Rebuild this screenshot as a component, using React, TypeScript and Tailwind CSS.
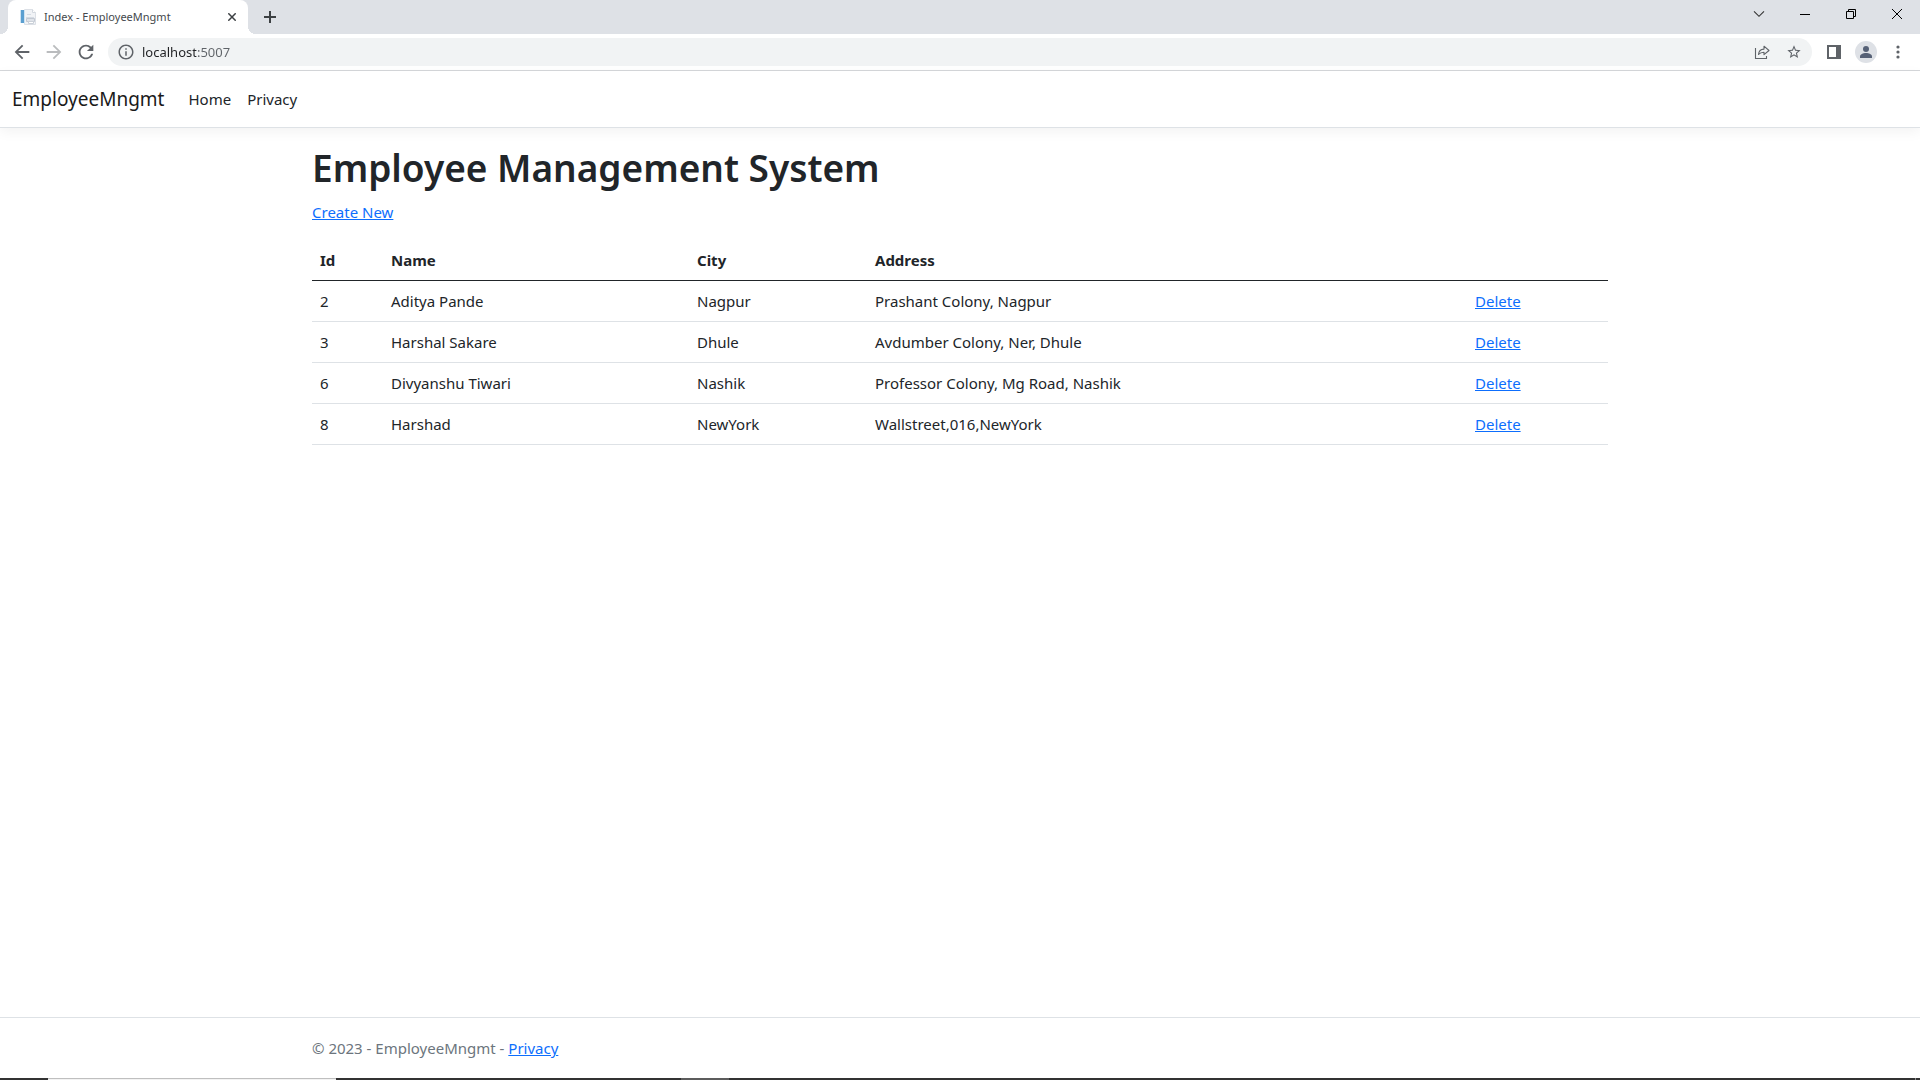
import type { ReactNode } from "react";

type Employee = { id: number; name: string; city: string; address: string };

const employees: Employee[] = [
  { id: 2, name: "Aditya Pande", city: "Nagpur", address: "Prashant Colony, Nagpur" },
  { id: 3, name: "Harshal Sakare", city: "Dhule", address: "Avdumber Colony, Ner, Dhule" },
  { id: 6, name: "Divyanshu Tiwari", city: "Nashik", address: "Professor Colony, Mg Road, Nashik" },
  { id: 8, name: "Harshad", city: "NewYork", address: "Wallstreet,016,NewYork" },
];

function WindowButton({ label, children }: { label: string; children: ReactNode }) {
  return (
    <button type="button" aria-label={label} className="flex h-7 w-[46px] items-center justify-center text-black">
      {children}
    </button>
  );
}

function ToolButton({ label, children }: { label: string; children: ReactNode }) {
  return (
    <button type="button" aria-label={label} className="flex h-7 w-8 shrink-0 items-center justify-center text-[#5f6368]">
      {children}
    </button>
  );
}

function PageIcon() {
  return (
    <svg width="16" height="16" viewBox="0 0 16 16" className="shrink-0" aria-hidden="true">
      <path d="M4.5.5h8l3 3v12h-11z" fill="#f1f3f6" stroke="#dce0e6" />
      <path d="M12.5.5v3h3" fill="#fff" stroke="#d3d8df" />
      <path d="M1 1h3v13H1z" fill="#5b9fd0" />
      <path d="M0 1h1v13H0zM4 1h1v14H4z" fill="#cfe3f2" />
      <path d="M7 5h4v1H7zM6 8h8v1H6z" fill="#d5dbe3" />
      <path d="M6.5 9.500h8v3h-8z" fill="#dfe3e9" stroke="#c3c9d2" />
      <path d="M8.500 12.500h5v2h-5z" fill="#fff" stroke="#cbd1d9" />
    </svg>
  );
}

function TabStrip() {
  return (
    <div className="flex h-[34px] items-start justify-between bg-[#dee1e6]">
      <div className="flex h-full items-end">
        <span className="size-2 bg-[radial-gradient(circle_at_top_left,transparent_8px,#fff_8px)]" />
        <div className="flex h-full w-60 items-center rounded-t-lg bg-white pl-3 pr-2">
          <PageIcon />
          <span className="ml-2 flex-1 whitespace-nowrap text-[11px] leading-4 text-[#45494d]">Index - EmployeeMngmt</span>
          <button type="button" aria-label="Close tab" className="flex size-4 items-center justify-center text-[#3c4043]">
            <svg width="8" height="8" viewBox="0 0 8 8" stroke="currentColor" strokeWidth="1.500">
              <path d="M.3.3l7.400 7.400M7.700.3L.3 7.700" />
            </svg>
          </button>
        </div>
        <span className="size-2 bg-[radial-gradient(circle_at_top_right,transparent_8px,#fff_8px)]" />
        <button type="button" aria-label="New tab" className="flex h-full w-7 items-center justify-center text-[#3c4043]">
          <svg width="12" height="12" viewBox="0 0 12 12" fill="currentColor">
            <path d="M5 0h2v5h5v2H7v5H5V7H0V5h5z" />
          </svg>
        </button>
      </div>
      <div className="flex">
        <WindowButton label="Search tabs">
          <svg width="12" height="8" viewBox="0 0 12 8" fill="none" stroke="#333" strokeWidth="1.100">
            <path d="M1 1.300l5 5 5-5" />
          </svg>
        </WindowButton>
        <WindowButton label="Minimize">
          <svg width="10" height="10" viewBox="0 0 10 10" fill="currentColor">
            <path d="M0 5h10v1H0z" />
          </svg>
        </WindowButton>
        <WindowButton label="Restore">
          <svg width="10" height="10" viewBox="0 0 10 10" fill="none" stroke="currentColor">
            <path d="M.5 2.500h7v7h-7zM2.500 2.500v-2h7v7h-2" />
          </svg>
        </WindowButton>
        <WindowButton label="Close">
          <svg width="10" height="10" viewBox="0 0 10 10" stroke="currentColor">
            <path d="M0 0l10 10M10 0L0 10" />
          </svg>
        </WindowButton>
      </div>
    </div>
  );
}

function Toolbar() {
  return (
    <div className="flex h-[37px] items-center border-b border-[#d5d7da] bg-white px-1.5">
      <ToolButton label="Back">
        <svg width="22" height="22" viewBox="0 0 24 24" fill="currentColor">
          <path d="M20 11H7.830l5.590-5.590L12 4l-8 8 8 8 1.410-1.410L7.830 13H20v-2z" />
        </svg>
      </ToolButton>
      <ToolButton label="Forward">
        <svg width="22" height="22" viewBox="0 0 24 24" fill="#babcbe">
          <path d="M12 4l-1.410 1.410L16.170 11H4v2h12.170l-5.580 5.590L12 20l8-8z" />
        </svg>
      </ToolButton>
      <ToolButton label="Reload">
        <svg width="22" height="22" viewBox="0 0 24 24" fill="currentColor">
          <path d="M17.650 6.350A7.958 7.958 0 0 0 12 4c-4.420 0-7.990 3.580-7.990 8s3.570 8 7.990 8c3.730 0 6.840-2.550 7.730-6h-2.080A5.990 5.990 0 0 1 12 18c-3.310 0-6-2.690-6-6s2.690-6 6-6c1.660 0 3.140.690 4.220 1.780L13 11h7V4l-2.350 2.350z" />
        </svg>
      </ToolButton>
      <div className="mx-1.5 flex h-7 flex-1 items-center rounded-full bg-[#f1f3f4] pl-0.5 pr-0.5">
        <button type="button" aria-label="View site information" className="flex h-7 w-8 items-center justify-center">
          <svg width="18" height="18" viewBox="0 0 24 24" fill="#5f6368">
            <path d="M11 7h2v2h-2zm0 4h2v6h-2zm1-9C6.480 2 2 6.480 2 12s4.480 10 10 10 10-4.480 10-10S17.520 2 12 2zm0 18c-4.410 0-8-3.590-8-8s3.590-8 8-8 8 3.590 8 8-3.590 8-8 8z" />
          </svg>
        </button>
        <input
          type="text"
          aria-label="Address"
          defaultValue="localhost:5007"
          className="h-5 min-w-0 flex-1 bg-[linear-gradient(to_right,#202124_54px,#5f6368_54px)] bg-clip-text text-[13px] leading-5 text-transparent caret-black outline-none"
        />
        <ToolButton label="Share">
          <svg width="16" height="16" viewBox="0 0 16 16" fill="none" stroke="currentColor" strokeWidth="1.100">
            <path d="M1.500 4v10.500h11V12" />
            <path d="M4.500 10.500c.3-3.600 2.200-5.300 5.500-5.400V2.200l5 4.300-5 4.200V8.200c-2.400 0-4.200.7-5.500 2.300z" strokeLinejoin="round" />
          </svg>
        </ToolButton>
        <ToolButton label="Bookmark this tab">
          <svg width="16" height="16" viewBox="0 0 24 24" fill="currentColor">
            <path d="M22 9.240l-7.190-.620L12 2 9.190 8.630 2 9.240l5.460 4.730L5.820 21 12 17.270 18.180 21l-1.630-7.030L22 9.240zM12 15.400l-3.760 2.270 1-4.280-3.320-2.880 4.380-.380L12 6.100l1.710 4.040 4.380.380-3.320 2.880 1 4.280L12 15.400z" />
          </svg>
        </ToolButton>
      </div>
      <ToolButton label="Side panel">
        <svg width="14" height="14" viewBox="0 0 14 14" fill="currentColor">
          <path fillRule="evenodd" d="M0 0h14v14H0zM2 2v10h7V2z" />
        </svg>
      </ToolButton>
      <ToolButton label="Profile">
        <svg width="22" height="22" viewBox="0 0 22 22">
          <circle cx="11" cy="11" r="11" fill="#dee1e6" />
          <circle cx="11" cy="8" r="3" fill="#566176" />
          <path d="M5 17v-1.500c0-2 3-3.500 6-3.500s6 1.500 6 3.500V17z" fill="#566176" />
        </svg>
      </ToolButton>
      <ToolButton label="Menu">
        <svg width="4" height="14" viewBox="0 0 4 14" fill="currentColor">
          <circle cx="2" cy="2" r="1.600" />
          <circle cx="2" cy="7" r="1.600" />
          <circle cx="2" cy="12" r="1.600" />
        </svg>
      </ToolButton>
    </div>
  );
}

function SiteHeader() {
  return (
    <header className="mb-4 flex h-[57px] items-center border-b border-[#dee2e6] px-3 shadow-[0_4px_12px_rgba(0,0,0,0.05)]">
      <a href="#" className="mr-4 text-[19px] leading-[30px] text-[#1a1a1a]">EmployeeMngmt</a>
      <nav className="flex text-[15px] leading-6">
        <a href="#home" className="p-2 text-[#212529]">Home</a>
        <a href="#privacy" className="p-2 text-[#212529]">Privacy</a>
      </nav>
    </header>
  );
}

function EmployeeTable() {
  return (
    <table className="w-full table-fixed border-collapse text-left">
      <colgroup>
        <col className="w-[71px]" />
        <col className="w-[306px]" />
        <col className="w-[178px]" />
        <col className="w-[600px]" />
        <col />
      </colgroup>
      <thead>
        <tr className="h-10 border-b border-[#212529]">
          <th scope="col" className="px-2 font-bold">Id</th>
          <th scope="col" className="px-2 font-bold">Name</th>
          <th scope="col" className="px-2 font-bold">City</th>
          <th scope="col" className="px-2 font-bold">Address</th>
          <td className="px-2" />
        </tr>
      </thead>
      <tbody>
        {employees.map((e) => (
          <tr key={e.id} className="h-[41px] border-b border-[#dee2e6]">
            <td className="px-2">{e.id}</td>
            <td className="px-2">{e.name}</td>
            <td className="px-2">{e.city}</td>
            <td className="px-2">{e.address}</td>
            <td className="px-2">
              <a href="#delete" className="text-[#0d6efd] underline">Delete</a>
            </td>
          </tr>
        ))}
      </tbody>
    </table>
  );
}

export default function App() {
  return (
    <div className="flex min-h-screen flex-col bg-white font-['Noto_Sans',sans-serif] text-[15px] leading-6 text-[#212529]">
      <TabStrip />
      <Toolbar />
      <SiteHeader />
      <main className="mx-auto w-full max-w-[1320px] flex-1 px-3">
        <h1 className="mb-2 text-[37px] font-semibold leading-[48px]">Employee Management System</h1>
        <p className="mb-4">
          <a href="#create" className="text-[#0d6efd] underline">Create New</a>
        </p>
        <EmployeeTable />
      </main>
      <footer className="border-t border-[#dee2e6] leading-[60px] text-[#6c757d]">
        <div className="mx-auto w-full max-w-[1320px] px-3">
          © 2023 - EmployeeMngmt - <a href="#privacy" className="text-[#0d6efd] underline">Privacy</a>
        </div>
      </footer>
      <div className="flex h-0.5 bg-[#333]">
        <span className="w-12" />
        <span className="w-72 border-t border-[#bfbfbf] bg-[#f3f3f3]" />
        <span className="ml-[345px] w-12 bg-[#5c5c5c]" />
        <span className="ml-auto mr-1 w-px bg-[#8c8c8c]" />
      </div>
    </div>
  );
}
